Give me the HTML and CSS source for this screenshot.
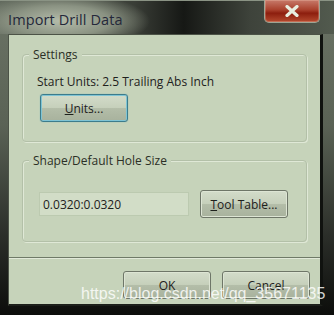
FILE: index.html
```html
<!DOCTYPE html>
<html lang="en">
<head>
    <meta charset="UTF-8">
    <title>Import Drill Data</title>
    <link rel="stylesheet" href="styles.css">
</head>
<body>
    <div class="window">
        <div class="titlebar">
            <span class="title">Import Drill Data</span>
            <div class="close">
                <svg width="16" height="12" viewBox="0 0 16 12">
                    <path d="M3 1.5 L13 10.5 M13 1.5 L3 10.5" stroke="#e8eee0" stroke-width="3.2" stroke-linecap="round"/>
                </svg>
            </div>
        </div>
        <div class="client">
            <div class="group settings">
                <span class="legend">Settings</span>
                <div class="units-text">Start Units: 2.5 Trailing Abs Inch</div>
                <button class="btn focused"><u>U</u>nits...</button>
            </div>
            <div class="group shape">
                <span class="legend">Shape/Default Hole Size</span>
                <div class="row">
                    <input class="field" type="text" value="0.0320:0.0320">
                    <button class="btn"><u>T</u>ool Table...</button>
                </div>
            </div>
            <div class="footer">
                <button class="btn">OK</button>
                <button class="btn">Cancel</button>
            </div>
        </div>
        <div class="watermark">https://blog.csdn.net/qq_35671135</div>
    </div>
</body>
</html>
```
FILE: styles.css
```css
body {
    margin: 0;
    background: #c4d0b8;
}
.window {
    position: relative;
    width: 334px;
    height: 315px;
    box-sizing: border-box;
    display: flex;
    flex-direction: column;
    background: linear-gradient(to bottom, #6c7466 0%, #5a6255 40%, #2b2e29 75%, #0c0d0b 100%);
    font-family: "Open Sans", "Noto Sans", sans-serif;
    color: #1e211c;
}
.titlebar {
    height: 33px;
    display: flex;
    align-items: flex-start;
    justify-content: space-between;
    background: radial-gradient(ellipse 90px 28px at 60px 20px, #b4bcaa 0%, #8a9282 55%, rgba(138,146,130,0) 100%),
                linear-gradient(to right, #5e665a 0%, #3a3e37 40%, #161815 55%, #3e433b 75%, #525a4e 100%);
    border-top: 1px solid #8a9384;
}
.title {
    margin: 9px 0 0 8px;
    font-size: 14.5px;
    color: #24283a;
    letter-spacing: 0.1px;
}
.close {
    width: 54px;
    height: 22px;
    margin-right: 14px;
    margin-top: -1px;
    display: flex;
    align-items: center;
    justify-content: center;
    background: linear-gradient(to bottom, #c77a6a 0%, #a9402c 45%, #8d1e0e 60%, #b44a2e 100%);
    border: 1px solid #9ea594;
    border-top: none;
    border-radius: 0 0 5px 5px;
    box-shadow: inset 0 0 0 1px rgba(255,220,200,0.25);
}
.client {
    flex: 1;
    margin: 0 11px 9px 8px;
    background: #c6d3ba;
    border: 1px solid #4c5347;
    border-right: 3px solid #10120f;
    border-bottom: 2px solid #1c1f1a;
    display: flex;
    flex-direction: column;
    padding: 19px 13px 0 13px;
}
.group {
    box-sizing: border-box;
    border: 1px solid #b3c0a8;
    box-shadow: 1px 1px 0 #dfe8d6 inset, 1px 1px 0 #dfe8d6;
    border-radius: 4px;
    font-size: 12px;
}
.legend {
    display: inline-block;
    margin: -9px 0 0 6px;
    padding: 0 4px;
    background: #c6d3ba;
    color: #2b2f26;
    vertical-align: top;
}
.settings {
    height: 88px;
    padding: 0 0 0 14px;
}
.settings .legend {
    margin-left: -8px;
}
.units-text {
    margin-top: 1px;
}
.btn {
    font-family: inherit;
    font-size: 12px;
    color: #1e211c;
    width: 88px;
    height: 28px;
    padding: 0;
    border: 1px solid #6e7668;
    border-radius: 3px;
    background: linear-gradient(to bottom, #d3dcca 0%, #c6d0bb 48%, #b3bda8 52%, #a8b29d 100%);
    box-shadow: inset 0 0 0 1px #dde5d4;
}
.btn.focused {
    margin-top: 4px;
    margin-left: 3px;
    border: 1px solid #3c7c8c;
    box-shadow: inset 0 0 0 1px #7fc4d4, 0 0 1px #5aa8bc;
}
.shape {
    margin-top: 18px;
    height: 82px;
}
.row {
    display: flex;
    align-items: center;
    gap: 11px;
    padding: 12px 0 0 16px;
}
.field {
    width: 150px;
    height: 24px;
    box-sizing: border-box;
    font-family: inherit;
    font-size: 12px;
    color: #1e211c;
    background: #d2ddc7;
    border: 1px solid #bccab0;
    padding: 0 0 0 3px;
}
.footer {
    margin: 15px -13px 0 -13px;
    border-top: 1px solid #6f7a68;
    box-shadow: inset 0 1px 0 #e1e9d9;
    flex: 1;
    display: flex;
    justify-content: flex-end;
    align-items: flex-start;
    gap: 11px;
    padding: 13px 10px 0 0;
}
.watermark {
    position: absolute;
    left: 81px;
    top: 285px;
    font-family: "Liberation Sans", Arial, sans-serif;
    font-size: 16px;
    color: rgba(255, 255, 255, 0.82);
}
```
